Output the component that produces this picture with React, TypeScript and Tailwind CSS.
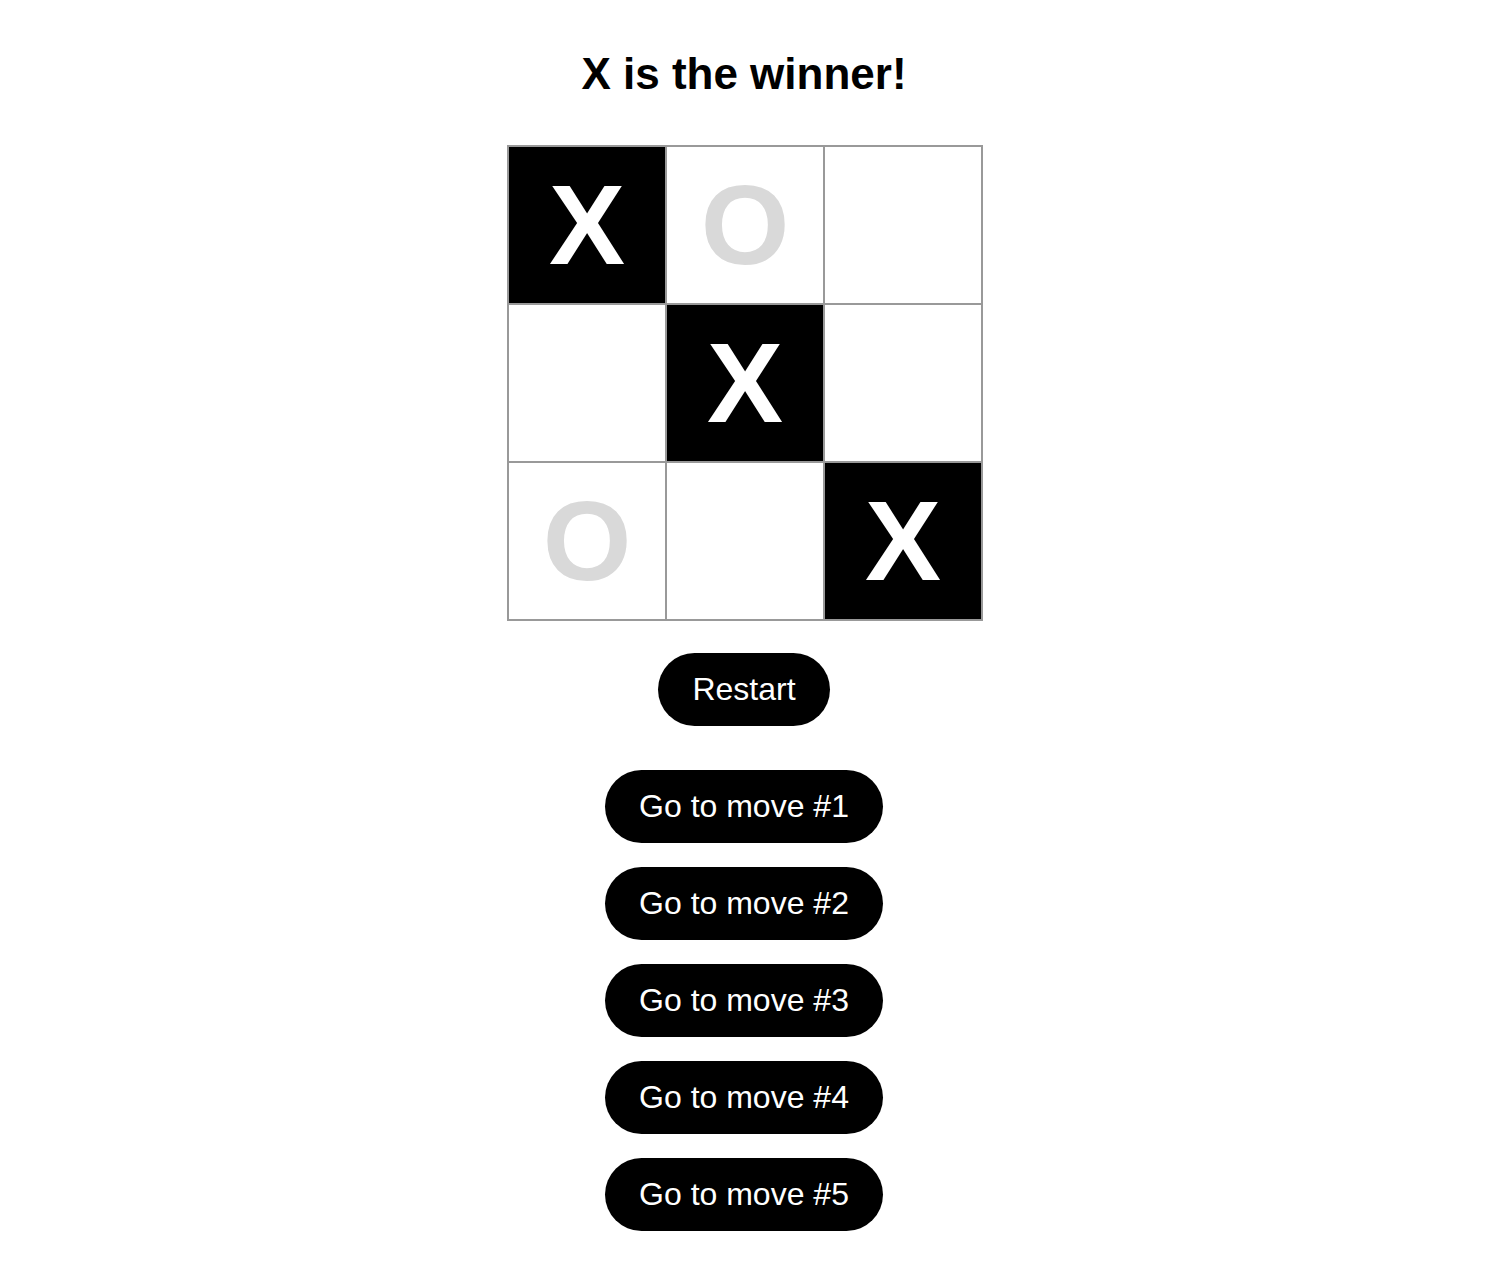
import React from "react";

const board: (string | null)[] = ["X", "O", null, null, "X", null, "O", null, "X"];
const winLine = [0, 4, 8];

export default function App() {
  return (
    <div
      className="min-h-screen bg-white flex flex-col items-center text-black"
      style={{ fontFamily: '"Liberation Sans", Arial, Helvetica, sans-serif' }}
    >
      <h1 className="mt-[52px] text-[44px] leading-[44px] font-bold">X is the winner!</h1>
      <div className="mt-[49px] ml-[2px] grid grid-cols-3 border border-[#999999]">
        {board.map((v, i) => {
          const win = winLine.includes(i);
          return (
            <div
              key={i}
              className={
                "w-[158px] h-[158px] border border-[#999999] flex items-center justify-center text-[114px] leading-none font-bold " +
                (win ? "bg-black text-white" : "bg-white text-[#d9d9d9]")
              }
            >
              {v}
            </div>
          );
        })}
      </div>
      <button className="mt-[32px] h-[73px] px-[34px] pb-[2px] rounded-full bg-black text-white text-[32px] leading-none flex items-center justify-center">
        Restart
      </button>
      <div className="mt-[44px] flex flex-col items-center gap-[24px]">
        {[1, 2, 3, 4, 5].map((n) => (
          <button
            key={n}
            className="h-[73px] w-[278px] pb-[2px] rounded-full bg-black text-white text-[32px] leading-none flex items-center justify-center"
          >
            Go to move #{n}
          </button>
        ))}
      </div>
    </div>
  );
}
